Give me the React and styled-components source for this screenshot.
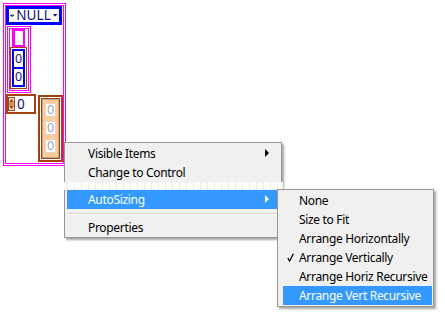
import React from 'react';
import styled, { createGlobalStyle } from 'styled-components';

const MAGENTA = '#ff00ff';
const BLUE = '#0000ff';
const BROWN = '#a4410f';
const PEACH = '#ffcc99';
const NAVY = '#10107a';
const HILITE = '#3399ff';

const Global = createGlobalStyle`
  html, body { margin: 0; padding: 0; background: #ffffff; }
  body {
    width: 445px; height: 315px; overflow: hidden;
    font-family: "Noto Sans", "Open Sans", "Liberation Sans", sans-serif;
    -webkit-font-smoothing: antialiased;
  }
`;

const Page = styled.div`
  position: relative;
  width: 445px;
  height: 315px;
  box-sizing: border-box;
  padding: 3px 0 0 3px;
`;

/* ---------- LabVIEW front-panel cluster ---------- */
const Cluster = styled.div`
  box-sizing: border-box;
  width: ${p => p.$w}px;
  height: ${p => p.$h}px;
  margin: ${p => p.$m || '0'};
  border: 3px double ${MAGENTA};
  background: #fff;
  display: flex;
  flex-direction: column;
  align-items: flex-start;
`;

const Ring = styled.div`
  box-sizing: border-box;
  width: 56px;
  height: 19px;
  border: 3px solid ${BLUE};
  background: #fff;
  display: flex;
  align-items: center;
  padding: 0 2px 0 1px;
  gap: 2px;
  color: ${NAVY};
  font-size: 13.5px;
  line-height: 13px;
`;

const RingText = styled.span`
  flex: 1;
  letter-spacing: 0.1px;
`;

const LabelBox = styled.div`
  box-sizing: border-box;
  width: 13px;
  height: 18px;
  margin-left: 2px;
  border: 2px solid ${MAGENTA};
  border-left-width: 3px;
  background: #fff;
`;

const ArrayFrame = styled.div`
  box-sizing: border-box;
  border: 1px solid ${BROWN};
  padding: 1px;
  background: #fff;
`;

const BlueColumn = styled.div`
  box-sizing: border-box;
  width: 13px;
  background: ${BLUE};
  padding: 2px;
  display: flex;
  flex-direction: column;
  gap: 2px;
`;

const BlueCell = styled.div`
  height: 16px;
  background: #fff;
  color: ${NAVY};
  font-size: 12.5px;
  line-height: 16px;
  text-align: center;
`;

const BottomRow = styled.div`
  display: flex;
  align-items: flex-start;
  gap: 2px;
`;

const Numeric = styled.div`
  box-sizing: border-box;
  width: 30px;
  height: 20px;
  margin-top: 1px;
  border: 2px solid ${BROWN};
  background: #fff;
  display: flex;
  align-items: center;
  gap: 2px;
  color: ${NAVY};
  font-size: 13.5px;
  line-height: 14px;
`;

const ArrayOuter = styled.div`
  box-sizing: border-box;
  width: 25px;
  margin-top: 2px;
  border: 2px solid ${BROWN};
  padding: 1px;
  background: #fff;
`;

const ArrayInner = styled.div`
  border: 1px solid ${BROWN};
`;

const ArrayBody = styled.div`
  border: 1px solid #b9a79a;
  background: ${PEACH};
  padding: 3px 2px 4px;
  display: flex;
  flex-direction: column;
  gap: 4px;
`;

const GrayCell = styled.div`
  box-sizing: border-box;
  height: 14px;
  background: #fff;
  border: 1px solid #e8d2bd;
  color: #9fa3b8;
  font-size: 12.5px;
  line-height: 12px;
  text-align: center;
`;

/* ---------- Windows context menus ---------- */
const Menu = styled.div`
  position: absolute;
  left: ${p => p.$x}px;
  top: ${p => p.$y}px;
  width: ${p => p.$w}px;
  box-sizing: border-box;
  background: #f0f0f0;
  border: 1px solid #979797;
  padding: ${p => p.$pad};
  box-shadow: 2px 2px 2px rgba(0, 0, 0, 0.35);
  font-size: 12px;
  letter-spacing: -0.32px;
  color: #000;
`;

const Item = styled.div`
  position: relative;
  height: 19px;
  display: flex;
  align-items: center;
  padding-left: ${p => p.$indent}px;
  background: ${p => (p.$active ? HILITE : 'transparent')};
  color: ${p => (p.$active ? '#fff' : '#000')};
  white-space: nowrap;
  line-height: 19px;
`;

const SubArrow = styled.span`
  position: absolute;
  right: 10px;
  top: 5px;
  width: 0;
  height: 0;
  border-top: 4.5px solid transparent;
  border-bottom: 4.5px solid transparent;
  border-left: 4.5px solid ${p => (p.$light ? '#fff' : '#000')};
`;

const Check = styled.svg`
  position: absolute;
  left: 4px;
  top: 5px;
`;

const Glitch = styled.div`
  height: 8px;
  margin: 0 -4px 0 -3px;
  background:
    repeating-linear-gradient(90deg, rgba(0,0,0,0) 0 3px, rgba(200,200,200,0.35) 3px 4px, rgba(0,0,0,0) 4px 7px),
    linear-gradient(180deg, #f4f4f4 0, #ffffff 2px, #fdfdfd 6px, #f2f2f2 8px);
`;

const Separator = styled.div`
  height: 9px;
  display: flex;
  align-items: center;
  &::after {
    content: '';
    flex: 1;
    border-top: 1px solid #d4d4d4;
    border-bottom: 1px solid #ffffff;
  }
`;

function Spinner() {
  return (
    <svg width="7" height="14" viewBox="0 0 7 14">
      <rect x="0.5" y="0.5" width="6" height="13" fill="#f6e3d2" stroke={BROWN} />
      <line x1="0.5" y1="7" x2="6.5" y2="7" stroke={BROWN} />
      <polygon points="3.5,1.8 6,5.6 1,5.6" fill={BROWN} />
      <polygon points="3.5,12.2 6,8.4 1,8.4" fill={BROWN} />
    </svg>
  );
}

function RingArrows() {
  return (
    <svg width="7" height="7" viewBox="0 0 7 7">
      <polygon points="0,3.5 3,0.8 3,6.2" fill={NAVY} />
      <polygon points="7,3.5 4,0.8 4,6.2" fill={NAVY} />
    </svg>
  );
}

function DropTri() {
  return (
    <svg width="7" height="5" viewBox="0 0 7 5">
      <polygon points="0,0 7,0 3.5,4.5" fill={NAVY} />
    </svg>
  );
}

const subItems = [
  'None',
  'Size to Fit',
  'Arrange Horizontally',
  'Arrange Vertically',
  'Arrange Horiz Recursive',
  'Arrange Vert Recursive',
];

export default function App() {
  return (
    <Page>
      <Global />
      <Cluster $w={63} $h={163}>
        <Ring>
          <RingArrows />
          <RingText>NULL</RingText>
          <DropTri />
        </Ring>
        <Cluster $w={24} $h={67} $m="1px 0 0 1px">
          <LabelBox />
          <ArrayFrame>
            <BlueColumn>
              <BlueCell>0</BlueCell>
              <BlueCell>0</BlueCell>
            </BlueColumn>
          </ArrayFrame>
        </Cluster>
        <BottomRow>
          <Numeric>
            <Spinner />
            <span>0</span>
          </Numeric>
          <ArrayOuter>
            <ArrayInner>
              <ArrayBody>
                <GrayCell>0</GrayCell>
                <GrayCell>0</GrayCell>
                <GrayCell>0</GrayCell>
              </ArrayBody>
            </ArrayInner>
          </ArrayOuter>
        </BottomRow>
      </Cluster>

      <Menu $x={64} $y={142} $w={218} $pad="1px 2px 0 2px">
        <Item $indent={21}>Visible Items<SubArrow /></Item>
        <Item $indent={21}>Change to Control</Item>
        <Glitch />
        <Item $indent={21} $active>AutoSizing<SubArrow $light /></Item>
        <Separator />
        <Item $indent={21}>Properties</Item>
      </Menu>

      <Menu $x={277} $y={189} $w={157} $pad="1px 1px 1px 5px">
        {subItems.map((t, i) => (
          <Item key={t} $indent={16} $active={i === 5}>
            {i === 3 && (
              <Check width="7" height="9" viewBox="0 0 7 9">
                <path d="M0.8 5.2 L2.6 8 L6.4 0.8" fill="none" stroke="#000" strokeWidth="1.3" />
              </Check>
            )}
            {t}
          </Item>
        ))}
      </Menu>
    </Page>
  );
}
